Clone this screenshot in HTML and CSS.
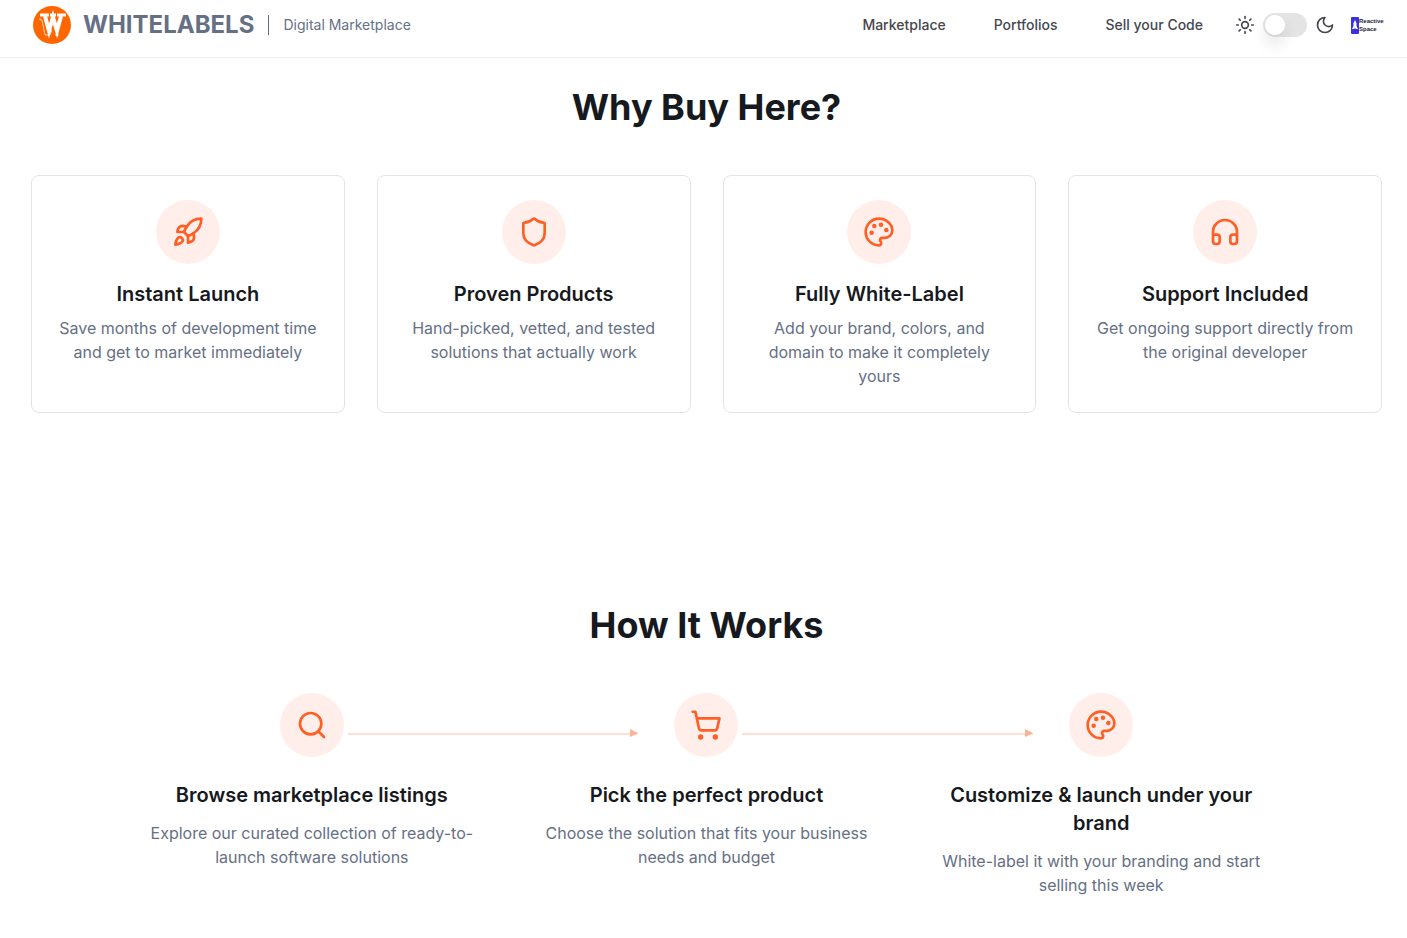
FILE: index.html
```
<!DOCTYPE html>
<html lang="en">
<head>
  <meta charset="UTF-8" />
  <meta name="viewport" content="width=device-width, initial-scale=1.0" />
  <title>WHITELABELS | Digital Marketplace</title>
  <link rel="stylesheet" href="styles.css">
</head>
<body>
  <!-- Shared icons -->
  <svg class="icon-defs" aria-hidden="true">
    <symbol id="icon-palette" viewBox="0 0 24 24">
      <circle cx="13.5" cy="6.5" r=".7" fill="currentColor"/>
      <circle cx="17.5" cy="10.5" r=".7" fill="currentColor"/>
      <circle cx="8.5" cy="7.5" r=".7" fill="currentColor"/>
      <circle cx="6.5" cy="12.5" r=".7" fill="currentColor"/>
      <path d="M12 2C6.5 2 2 6.5 2 12s4.500 10 10 10c.926 0 1.648-.746 1.648-1.688 0-.437-.18-.835-.437-1.125-.29-.289-.438-.652-.438-1.125a1.640 1.640 0 0 1 1.668-1.668h1.996c3.051 0 5.555-2.503 5.555-5.554C21.965 6.012 17.461 2 12 2z"/>
    </symbol>
    <symbol id="icon-arrow" viewBox="0 0 8 8">
      <path d="M0 0l8 4-8 4z" fill="currentColor" stroke="none"/>
    </symbol>
  </svg>

  <header class="site-header">
    <a href="#" class="brand">
      <svg class="brand-logo" viewBox="0 0 38 38" aria-hidden="true">
        <circle cx="19" cy="19" r="19" fill="#ff6600"/>
        <path d="M7 12v2h2l3 15h4M19 24l-2 5M22 29h4" fill="none" stroke="#ffd0ad" stroke-width="1"/>
        <path d="M12 10l4 15 4-14 4 14 4-15" fill="none" stroke="#fff" stroke-width="4"/>
        <path d="M7 9h9M17 9h6M24 9h9" fill="none" stroke="#fff" stroke-width="3"/>
      </svg>
      <span class="brand-name">WHITELABELS</span>
      <span class="brand-divider"></span>
      <span class="brand-tagline">Digital Marketplace</span>
    </a>

    <div class="header-right">
      <nav class="main-nav">
        <a href="#">Marketplace</a>
        <a href="#">Portfolios</a>
        <a href="#">Sell your Code</a>
      </nav>

      <div class="theme-switch">
        <svg class="theme-icon" viewBox="0 0 24 24" aria-hidden="true">
          <circle cx="12" cy="12" r="4"/>
          <path d="M12 2v2M12 20v2M4.930 4.930l1.410 1.410M17.660 17.660l1.410 1.410M2 12h2M20 12h2M6.340 17.660l-1.410 1.410M19.070 4.930l-1.410 1.410"/>
        </svg>
        <input type="checkbox" class="toggle" id="themeToggle" aria-label="Dark mode">
        <svg class="theme-icon" viewBox="0 0 24 24" aria-hidden="true">
          <path d="M12 3a6 6 0 0 0 9 9 9 9 0 1 1-9-9Z"/>
        </svg>
      </div>

      <a href="#" class="partner">
        <svg class="partner-mark" viewBox="0 0 8 17" aria-hidden="true">
          <rect width="8" height="17" rx="1" fill="#3b2fe0"/>
          <path d="M4 3l1.500 3v3L7 12H5L4 11l-1 1H1l1.500-3V6z" fill="#fff"/>
        </svg>
        <span class="partner-name">Reactive<br>Space</span>
      </a>
    </div>
  </header>

  <main>
    <section class="why">
      <h2>Why Buy Here?</h2>
      <div class="card-grid">
        <div class="card">
          <div class="icon-circle">
            <svg class="icon" viewBox="0 0 24 24" aria-hidden="true">
              <path d="M4.500 16.500c-1.500 1.260-2 5-2 5s3.740-.5 5-2c.71-.84.7-2.130-.09-2.910a2.180 2.180 0 0 0-2.910-.09z"/>
              <path d="m12 15-3-3a22 22 0 0 1 2-3.950A12.880 12.880 0 0 1 22 2c0 2.720-.78 7.500-6 11a22.350 22.350 0 0 1-4 2z"/>
              <path d="M9 12H4s.55-3.030 2-4c1.620-1.080 5 0 5 0"/>
              <path d="M12 15v5s3.030-.55 4-2c1.080-1.620 0-5 0-5"/>
            </svg>
          </div>
          <h3>Instant Launch</h3>
          <p>Save months of development time and get to market immediately</p>
        </div>

        <div class="card">
          <div class="icon-circle">
            <svg class="icon" viewBox="0 0 24 24" aria-hidden="true">
              <path d="M20 13c0 5-3.500 7.500-7.660 8.950a1 1 0 0 1-.67-.01C7.500 20.500 4 18 4 13V6a1 1 0 0 1 1-1c2 0 4.500-1.200 6.240-2.720a1.170 1.170 0 0 1 1.520 0C14.510 3.810 17 5 19 5a1 1 0 0 1 1 1z"/>
            </svg>
          </div>
          <h3>Proven Products</h3>
          <p>Hand-picked, vetted, and tested solutions that actually work</p>
        </div>

        <div class="card">
          <div class="icon-circle">
            <svg class="icon" aria-hidden="true"><use href="#icon-palette"/></svg>
          </div>
          <h3>Fully White-Label</h3>
          <p>Add your brand, colors, and domain to make it completely yours</p>
        </div>

        <div class="card">
          <div class="icon-circle">
            <svg class="icon" viewBox="0 0 24 24" aria-hidden="true">
              <path d="M3 14h3a2 2 0 0 1 2 2v3a2 2 0 0 1-2 2H5a2 2 0 0 1-2-2v-7a9 9 0 0 1 18 0v7a2 2 0 0 1-2 2h-1a2 2 0 0 1-2-2v-3a2 2 0 0 1 2-2h3"/>
            </svg>
          </div>
          <h3>Support Included</h3>
          <p>Get ongoing support directly from the original developer</p>
        </div>
      </div>
    </section>

    <section class="how">
      <h2>How It Works</h2>
      <div class="steps">
        <div class="step">
          <div class="icon-circle">
            <svg class="icon" viewBox="0 0 24 24" aria-hidden="true">
              <circle cx="11" cy="11" r="8"/>
              <path d="m21 21-4.300-4.300"/>
            </svg>
          </div>
          <div class="connector">
            <svg class="connector-arrow" aria-hidden="true"><use href="#icon-arrow"/></svg>
          </div>
          <h3>Browse marketplace listings</h3>
          <p>Explore our curated collection of ready-to-launch software solutions</p>
        </div>

        <div class="step">
          <div class="icon-circle">
            <svg class="icon" viewBox="0 0 24 24" aria-hidden="true">
              <circle cx="8" cy="21" r="1"/>
              <circle cx="19" cy="21" r="1"/>
              <path d="M2.050 2.050h2l2.660 12.420a2 2 0 0 0 2 1.580h9.780a2 2 0 0 0 1.950-1.570l1.650-7.430H5.120"/>
            </svg>
          </div>
          <div class="connector">
            <svg class="connector-arrow" aria-hidden="true"><use href="#icon-arrow"/></svg>
          </div>
          <h3>Pick the perfect product</h3>
          <p>Choose the solution that fits your business needs and budget</p>
        </div>

        <div class="step">
          <div class="icon-circle">
            <svg class="icon" aria-hidden="true"><use href="#icon-palette"/></svg>
          </div>
          <h3>Customize &amp; launch under your brand</h3>
          <p>White-label it with your branding and start selling this week</p>
        </div>
      </div>
    </section>
  </main>
</body>
</html>
```

FILE: styles.css
```
* {
  box-sizing: border-box;
}

body {
  margin: 0;
  background-color: #fff;
  color: #16191d;
  font-family: Inter, sans-serif;
  font-size: 16px;
  line-height: 24px;
}

a {
  color: inherit;
  text-decoration: none;
}

h2,
h3,
p {
  margin: 0;
}

.icon-defs {
  display: none;
}

/* Header */
.site-header {
  display: flex;
  align-items: center;
  justify-content: space-between;
  padding: 5px 24px 12px 33px;
  border-bottom: 1px solid #efeff0;
}

.brand {
  display: flex;
  align-items: center;
  height: 40px;
  color: #667085;
}

.brand-logo {
  width: 38px;
  height: 38px;
  margin-right: 12px;
}

.brand-name {
  font-size: 24px;
  font-weight: 700;
}

.brand-divider {
  width: 1px;
  height: 20px;
  margin: 0 14px;
  background-color: #667085;
}

.brand-tagline {
  font-size: 14px;
}

.header-right {
  display: flex;
  align-items: center;
}

.main-nav {
  display: flex;
  gap: 48px;
  margin-right: 32px;
  color: #46464c;
  font-size: 14px;
  font-weight: 500;
}

.theme-switch {
  display: flex;
  align-items: center;
  gap: 8px;
  margin-right: 16px;
}

.theme-icon {
  width: 20px;
  height: 20px;
  fill: none;
  stroke: #46464c;
  stroke-width: 2;
  stroke-linecap: round;
  stroke-linejoin: round;
}

.toggle {
  appearance: none;
  display: flex;
  align-items: center;
  width: 44px;
  height: 24px;
  margin: 0;
  padding: 2px;
  border-radius: 12px;
  background-color: #e4e4e5;
  cursor: pointer;
}

.toggle::before {
  content: "";
  width: 20px;
  height: 20px;
  border-radius: 50%;
  background-color: #fff;
  box-shadow: 0 10px 15px rgba(0, 0, 0, 0.1);
}

.toggle:checked {
  justify-content: flex-end;
}

.partner {
  display: flex;
  align-items: center;
  width: 32px;
}

.partner-mark {
  flex: none;
  width: 8px;
  height: 17px;
}

.partner-name {
  color: #1b1b3a;
  font-family: "Liberation Sans", sans-serif;
  font-size: 6px;
  font-weight: 700;
  line-height: 8px;
}

/* Sections */
h2 {
  margin-bottom: 48px;
  font-size: 36px;
  font-weight: 700;
  line-height: 40px;
  text-align: center;
}

h3 {
  font-size: 20px;
  font-weight: 600;
  line-height: 28px;
}

p {
  color: #667085;
}

.why {
  padding: 29px 25px 96px 31px;
}

.how {
  padding: 96px 25px 41px 31px;
}

.icon-circle {
  display: flex;
  align-items: center;
  justify-content: center;
  width: 64px;
  height: 64px;
  border-radius: 50%;
  background-color: #ffeee9;
}

.icon {
  width: 32px;
  height: 32px;
  color: #ff5e24;
  fill: none;
  stroke: currentColor;
  stroke-width: 2;
  stroke-linecap: round;
  stroke-linejoin: round;
}

/* Why buy cards */
.card-grid {
  display: grid;
  grid-template-columns: repeat(4, 1fr);
  gap: 32px;
}

.card {
  display: flex;
  flex-direction: column;
  align-items: center;
  padding: 24px;
  border: 1px solid #e4e4e7;
  border-radius: 8px;
  text-align: center;
}

.card h3 {
  margin: 16px 0 8px;
}

/* Steps */
.steps {
  display: grid;
  grid-template-columns: repeat(3, 1fr);
  gap: 32px;
  max-width: 1152px;
  margin: 0 auto;
}

.step {
  position: relative;
  display: flex;
  flex-direction: column;
  align-items: center;
  padding: 0 16px;
  text-align: center;
}

.step h3 {
  margin: 24px 0 12px;
}

/* Line that runs across the gap to the next step */
.connector {
  position: absolute;
  top: 40px;
  left: calc(50% + 36px);
  width: 80%;
  height: 2px;
  background-color: #ffdfd3;
}

.connector-arrow {
  position: absolute;
  top: -4px;
  right: 0;
  width: 8px;
  height: 8px;
  color: #ffb192;
}
```
